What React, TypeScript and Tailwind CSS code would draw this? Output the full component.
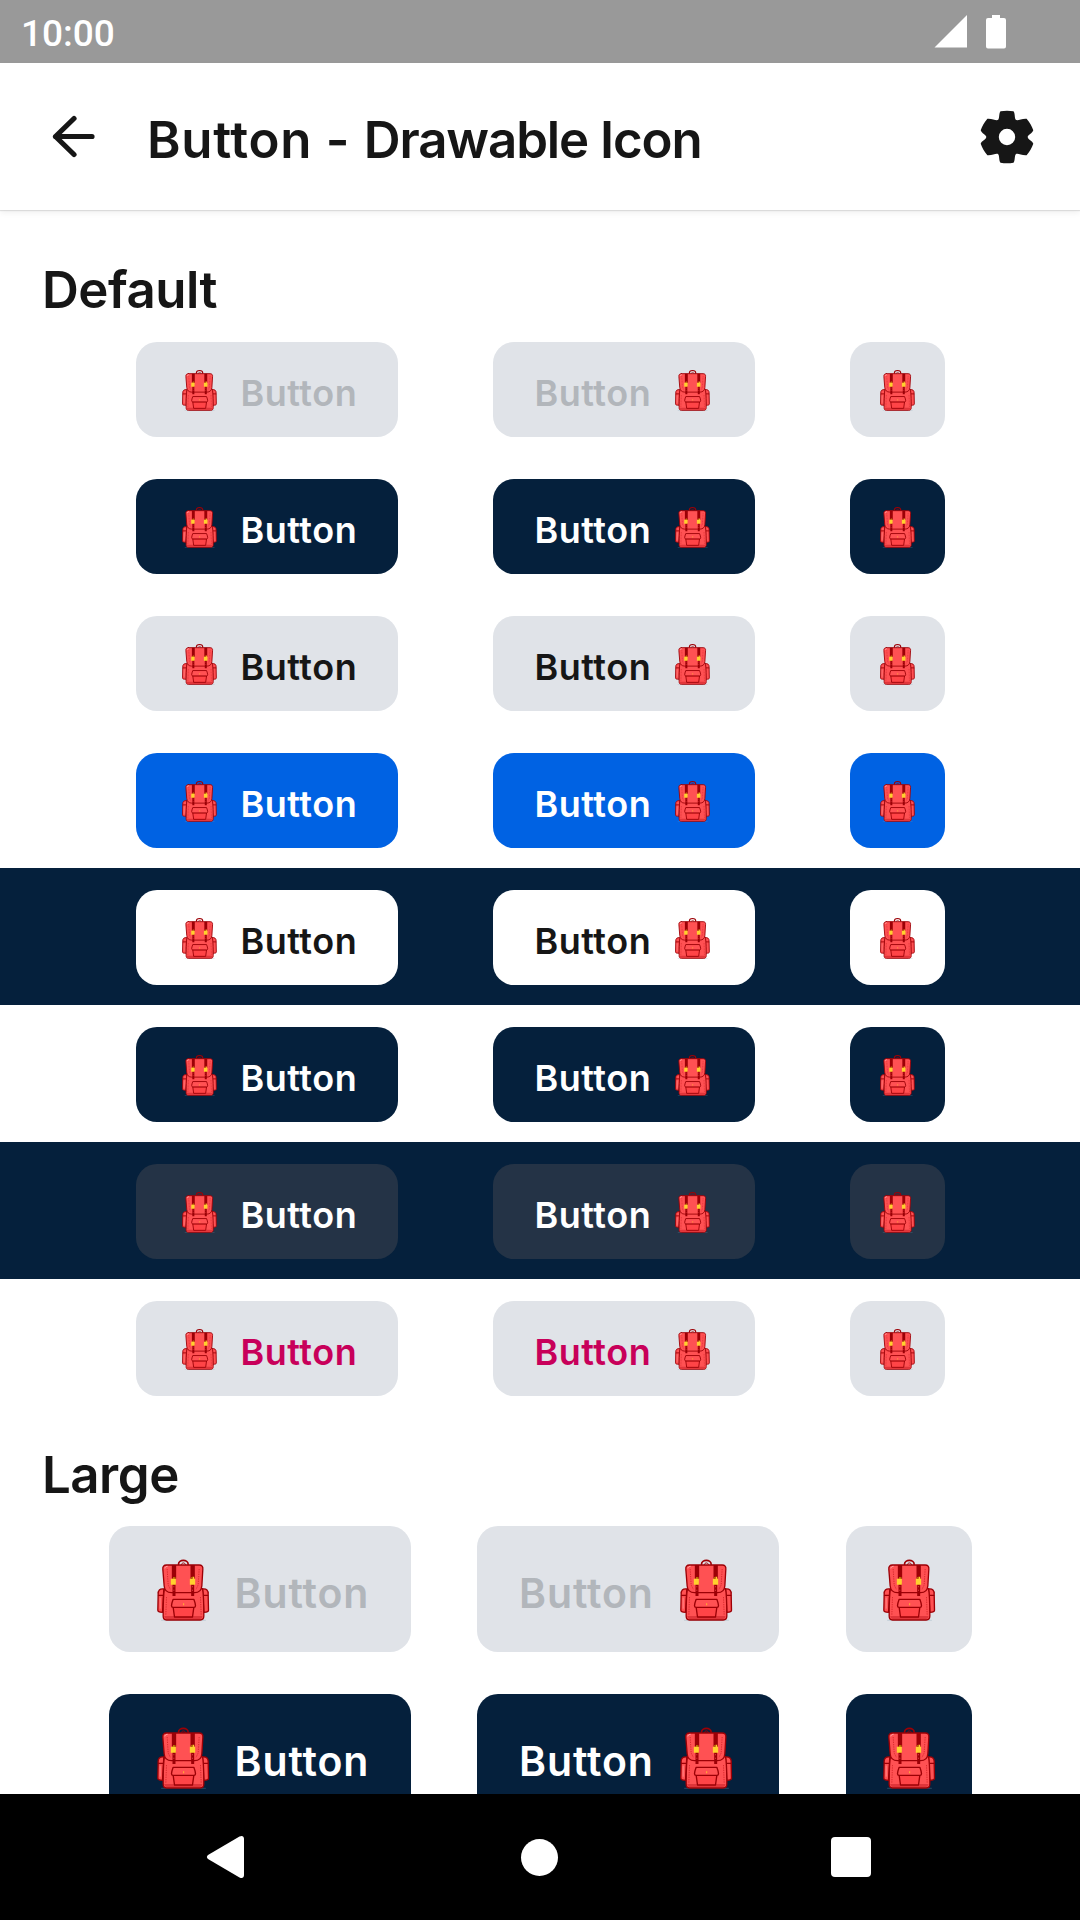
import React from "react";

type Variant = { bg: string; text: string; row: string };

const variants: Variant[] = [
  { bg: "bg-[#e0e3e8]", text: "text-[#b2b6bb]", row: "" },
  { bg: "bg-[#05203c]", text: "text-white", row: "" },
  { bg: "bg-[#e0e3e8]", text: "text-[#161616]", row: "" },
  { bg: "bg-[#0062e3]", text: "text-white", row: "" },
  { bg: "bg-white", text: "text-[#161616]", row: "bg-[#05203c]" },
  { bg: "bg-[#05203c]", text: "text-white", row: "" },
  { bg: "bg-[#243346]", text: "text-white", row: "bg-[#05203c]" },
  { bg: "bg-[#e0e3e8]", text: "text-[#c8005a]", row: "" },
];

function Backpack({ className }: { className: string }) {
  return (
    <svg viewBox="1.5 0 189 189" className={`shrink-0 ${className}`} fill="none" aria-hidden="true">
      <path d="M32 187h134" stroke="#7fa0b4" strokeOpacity=".25" strokeWidth="4" />
      <g stroke="#9c0006" strokeWidth="4" strokeLinejoin="round" strokeLinecap="round">
        <path d="M84 19c0-16 29-16 29 0" strokeWidth="5" />
        <path d="M93 19c1-6 10-6 12 0" strokeWidth="3" />
        <path d="M40 93c-12-2-18 5-17 16l-1 48c0 5 4 6 14 6z" fill="#ff5153" />
        <path d="M156 93c12-2 18 5 17 16l1 48c0 5-4 6-14 6z" fill="#ff5153" />
        <path d="M24 112h15M157 112h15" />
        <path d="M42 92c-3 14-4 38-4 82 0 8 4 12 10 12h101c7 0 11-4 11-12 0-44-1-68-4-82z" fill="#ff5153" />
        <path d="M48 21h98c8 0 12 5 11 13l-3 50c-1 12-9 20-22 20H63c-13 0-21-8-22-20l-4-50c-1-8 3-13 11-13z" fill="#ff5153" />
      </g>
      <path d="M41 174h115c-1 6-3 9-8 9H49c-5 0-7-3-8-9z" fill="#e0353a" />
      <path d="M64 21h13v41H64zM120 21h13v41h-13z" fill="#9c0006" />
      <path d="M66 76h9v38h-9zM122 76h9v38h-9z" fill="#9c0006" />
      <path d="M50 33l3 48 7 14M146 33l-3 48-7 14M48 117l-2 53M150 117l2 53" stroke="#c9161b" strokeWidth="2" strokeDasharray="4 3" />
      <path d="M43 31c1-4 4-6 8-6" stroke="#ffb0b0" strokeWidth="3" />
      <path d="M29 119v33" stroke="#ff8585" strokeWidth="3" />
      <path d="M61 62h7v-5h5v5h3v18H61zM118 62h8v-6h5v6h3v18h-16z" fill="#ffd12e" />
      <path d="M68 57h7v5h-7zM121 57h5v5h-5z" fill="#b06a00" />
      <path d="M70 84v4M70 95v4M126 84v4M126 95v4" stroke="#e5484b" strokeWidth="2" />
      <g stroke="#9c0006" strokeWidth="4" strokeLinejoin="round">
        <path d="M68 148l4 29h54l4-29z" fill="#ff4447" />
        <path d="M68 124h62c3 8 5 14 5 19 0 3-2 5-5 5H68c-3 0-5-2-5-5 0-5 2-11 5-19z" fill="#ff5153" />
      </g>
      <path d="M98 136h3v6h-3z" fill="#ffb52e" />
    </svg>
  );
}

function DemoButton({ v, large, icon }: { v: Variant; large?: boolean; icon: "start" | "end" | "only" }) {
  const pack = <Backpack className={large ? "size-[63px]" : "size-[42px]"} />;
  const size = large ? "h-[126px]" : "h-[95px]";
  if (icon === "only") {
    return (
      <button className={`flex items-center justify-center rounded-[21px] ${size} ${large ? "w-[126px]" : "w-[95px]"} ${v.bg}`}>
        {pack}
      </button>
    );
  }
  return (
    <button className={`flex items-center justify-between rounded-[21px] px-[42px] ${size} ${large ? "w-[302px]" : "w-[262px]"} ${v.bg}`}>
      {icon === "start" && pack}
      <span
        className={`whitespace-nowrap font-semibold leading-none ${v.text} ${
          large
            ? "w-[134px] pt-[8px] text-left text-[41px] tracking-[0.9px]"
            : "w-[115px] pt-[7px] text-left text-[36px] tracking-[0.5px]"
        }`}
      >
        Button
      </span>
      {icon === "end" && pack}
    </button>
  );
}

function Row({ v, large }: { v: Variant; large?: boolean }) {
  return (
    <div
      className={`flex shrink-0 items-start justify-center pt-[22px] ${
        large ? "h-[168px] gap-[66.5px]" : "h-[137px] gap-[95px]"
      } ${v.row}`}
    >
      <DemoButton v={v} large={large} icon="start" />
      <DemoButton v={v} large={large} icon="end" />
      <DemoButton v={v} large={large} icon="only" />
    </div>
  );
}

export default function App() {
  return (
    <div className="flex h-[1920px] w-[1080px] flex-col overflow-hidden bg-white font-['Inter',sans-serif] text-[#161616]">
      <div className="flex h-[63px] shrink-0 items-center bg-[#999] pl-[21px] pr-[73px] text-white">
        <span className="mt-[3px] font-['Roboto',sans-serif] text-[37px] font-medium leading-none">10:00</span>
        <svg className="ml-auto h-[35px] w-[74px]" viewBox="0 0 74 35" fill="#fff" aria-hidden="true">
          <path d="M1.500 33.500 34 1v32.500z" />
          <path d="M59 1h8v3h4a2 2 0 0 1 2 2v26.500a2 2 0 0 1-2 2H55a2 2 0 0 1-2-2V6a2 2 0 0 1 2-2h4z" />
        </svg>
      </div>

      <header className="z-10 flex h-[147px] shrink-0 items-center bg-white pl-[52px] pr-[46.5px] shadow-[0_1px_1px_rgba(0,0,0,0.1),0_3px_6px_rgba(0,0,0,0.06)]">
        <svg className="h-[43px] w-[43px]" viewBox="0 0 43 43" fill="none" stroke="#161616" strokeWidth="5.200" strokeLinecap="round" strokeLinejoin="round" aria-hidden="true">
          <path d="M22 3.500 3.500 21.500 22 39.500M3.500 21.500H40" />
        </svg>
        <h1 className="ml-[52px] whitespace-pre pt-[6px] text-[51px] font-semibold leading-none tracking-[-1.1px]">
          <span className="tracking-[0.7px]">Button - </span>Drawable Icon
        </h1>
        <svg className="ml-auto h-[54px] w-[54px]" viewBox="0 0 54 54" fill="#161616" aria-hidden="true">
          <path
            fillRule="evenodd"
            d="M20.500 1.200Q27 .2 33.500 1.200C35.400 4 34.300 8 35.800 9.700C37.500 11.200 41.500 8.300 46.600 8.700C49.700 12.200 51.800 15.900 53.300 20.200C52.500 23.300 47.700 24.600 47.700 27C47.700 29.400 52.500 30.700 53.300 33.800C51.800 38.100 49.700 41.800 46.600 45.300C41.500 45.700 37.500 42.800 35.800 44.300C34.300 46 35.400 50 33.500 52.800Q27 53.800 20.500 52.800C18.600 50 19.700 46 18.200 44.300C16.500 42.800 12.500 45.700 7.400 45.300C4.300 41.800 2.200 38.100.7 33.800C1.500 30.700 6.300 29.400 6.300 27C6.300 24.600 1.500 23.300.7 20.200C2.200 15.900 4.300 12.200 7.400 8.700C12.500 8.300 16.500 11.200 18.200 9.700C19.700 8 18.600 4 20.500 1.200ZM27 18.800a8.200 8.200 0 1 0 0 16.400a8.200 8.200 0 1 0 0-16.400Z"
          />
        </svg>
      </header>

      <main className="flex min-h-0 flex-1 flex-col overflow-hidden">
        <h2 className="h-[110px] shrink-0 pl-[42px] pt-[54px] text-[51px] font-semibold leading-[51px] tracking-[-0.5px]">Default</h2>
        {variants.map((v, i) => (
          <Row key={i} v={v} />
        ))}
        <h2 className="h-[88px] shrink-0 pl-[42px] pt-[33px] text-[51px] font-semibold leading-[51px] tracking-[-0.5px]">Large</h2>
        {variants.slice(0, 2).map((v, i) => (
          <Row key={i} v={v} large />
        ))}
      </main>

      <nav className="flex h-[126px] shrink-0 items-center justify-between bg-black pl-[206px] pr-[209px]">
        <svg className="h-[44px] w-[39px]" viewBox="0 0 39 44" fill="#fff" aria-hidden="true">
          <path d="M2 20 33.500 1.500C36 .3 38 1 38 4v36c0 3-2 3.700-4.500 2.500L2 24C.5 23 .5 21 2 20z" />
        </svg>
        <span className="ml-[3px] size-[37px] rounded-full bg-white" />
        <span className="size-[40px] rounded-[4px] bg-white" />
      </nav>
    </div>
  );
}
